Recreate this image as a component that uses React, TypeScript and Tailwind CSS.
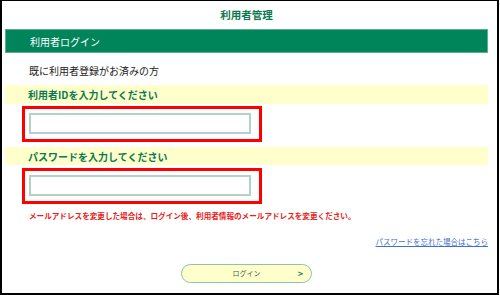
import React from 'react';

const font = { fontFamily: '"Noto Sans CJK JP", "Noto Sans", sans-serif' };

const FieldBox: React.FC<{ type: string }> = ({ type }) => (
  <div className="ml-[17px] w-[240px] h-[36px] border-[3px] border-[#ff0000] pl-[4px] pt-[4px]">
    <input
      type={type}
      className="block w-[222px] h-[21px] border-2 border-[#b3d0c9] bg-white outline-none"
    />
  </div>
);

const App: React.FC = () => {
  return (
    <div
      className="w-[499px] h-[295px] bg-white border-x-2 border-t border-b-2 border-black pl-[3px] pr-[9px] flex flex-col"
      style={font}
    >
      <div className="h-[28px] flex items-center justify-center text-[10.5px] font-bold text-[#0a7a50]">
        利用者管理
      </div>

      <div className="h-[24px] bg-[#00845a] border border-[#5fae93] flex items-center pl-[24px] text-[10px] text-white">
        利用者ログイン
      </div>

      <div className="h-[32px] flex items-center pl-[24px] pt-[2px] text-[10px] text-[#222]">
        既に利用者登録がお済みの方
      </div>

      <div className="h-[19px] bg-[#ffffcc] flex items-center pl-[23px] text-[10px] font-bold text-[#0a7a50]">
        利用者IDを入力してください
      </div>
      <div className="mt-[2px]">
        <FieldBox type="text" />
      </div>

      <div className="mt-[5px] h-[18px] bg-[#ffffcc] flex items-center pl-[23px] text-[10px] font-bold text-[#0a7a50]">
        パスワードを入力してください
      </div>
      <div className="mt-[3px]">
        <FieldBox type="password" />
      </div>

      <div className="h-[24px] flex items-center pl-[24px] text-[7.6px] font-bold text-[#e8221b]">
        メールアドレスを変更した場合は、ログイン後、利用者情報のメールアドレスを変更ください。
      </div>

      <div className="h-[28px] flex items-center justify-end">
        <a href="#" className="text-[7.5px] text-[#3f6fd0] underline">
          パスワードを忘れた場合はこちら
        </a>
      </div>

      <button className="mt-[8px] mx-auto w-[131px] h-[19px] rounded-full bg-[#ffffcc] border-[1.5px] border-[#8cc4a6] relative flex items-center justify-center text-[7px] text-[#3d6650]">
        ログイン
        <span className="absolute right-[8px] top-1/2 -translate-y-1/2 text-[9px] font-bold text-[#1f8a5a]">
          &gt;
        </span>
      </button>
    </div>
  );
};

export default App;
